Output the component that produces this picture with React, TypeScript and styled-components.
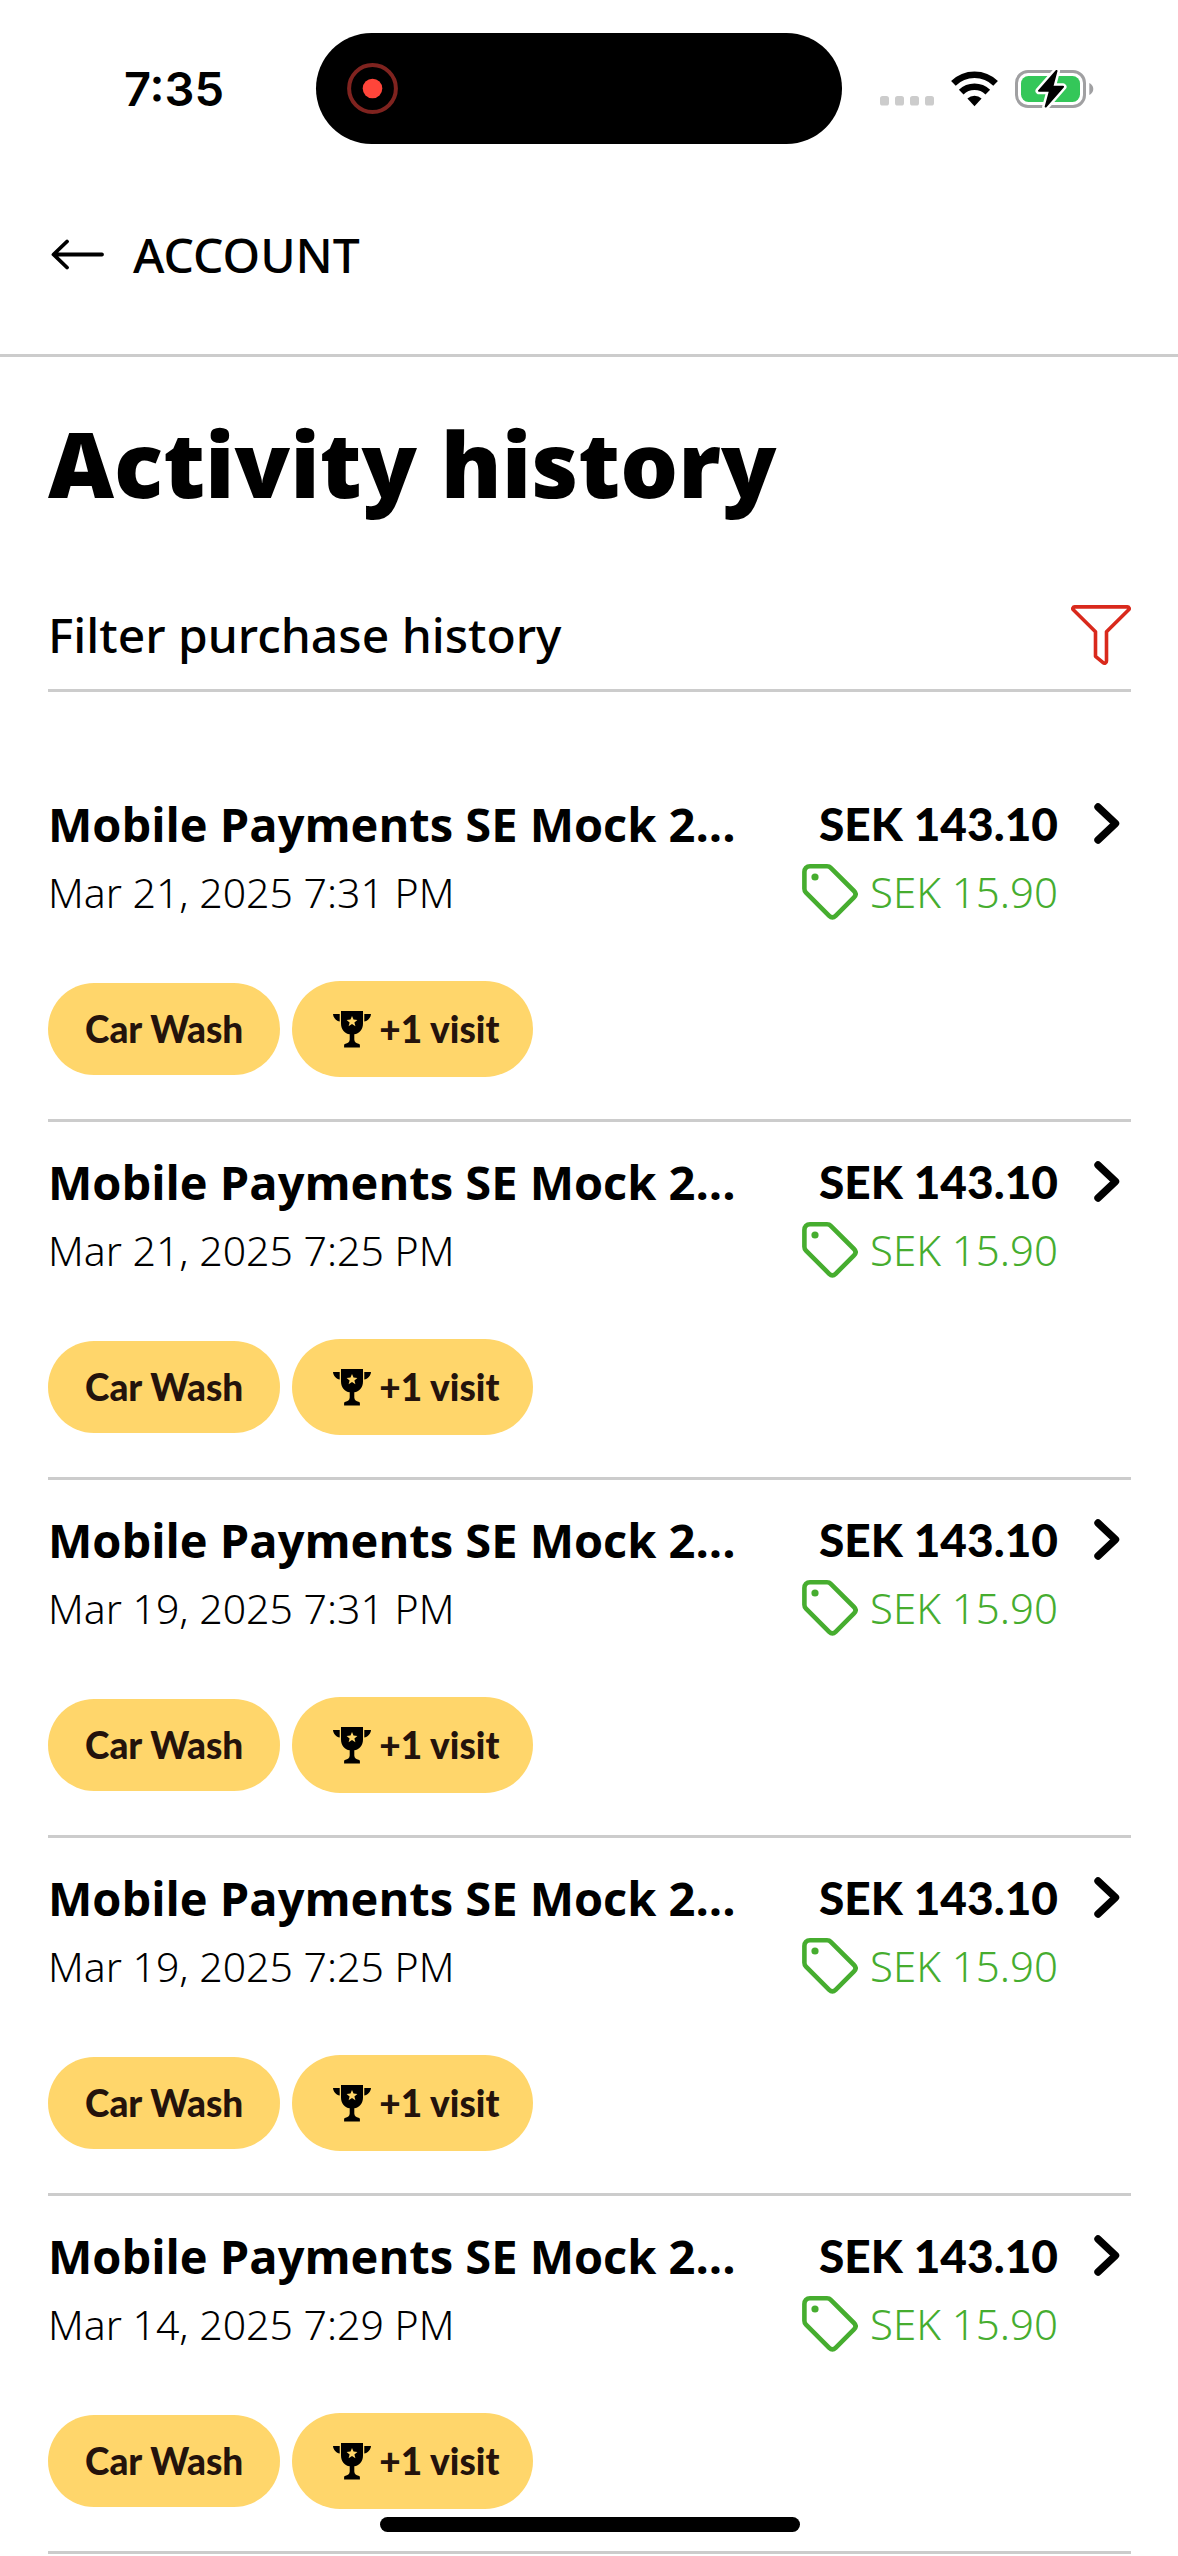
import React from "react";
import styled, { createGlobalStyle } from "styled-components";

const GlobalStyle = createGlobalStyle`
  *, *::before, *::after { box-sizing: border-box; }
  body {
    margin: 0;
    background: #fff;
    color: #000;
    font-family: Lato, "Open Sans", sans-serif;
    font-variant-ligatures: none;
  }
  h1, h2, p, ul { margin: 0; padding: 0; }
  ul { list-style: none; }
  a { color: inherit; text-decoration: none; }
  svg { display: block; flex: none; }
`;

const heading = `"Open Sans", "Noto Sans", sans-serif`;
const text = `"Noto Sans", "Open Sans", sans-serif`;

const Screen = styled.div`
  min-height: 100vh;
  background: #fff;
`;

const StatusBar = styled.div`
  display: grid;
  grid-template-columns: 1fr 526px 1fr;
  align-items: center;
  padding: 33px 20px 0 0;
`;

const Clock = styled.time`
  padding-right: 92px;
  text-align: right;
  font: 600 47px/56px Inter, sans-serif;
`;

const Island = styled.div`
  display: flex;
  align-items: center;
  height: 111px;
  padding-left: 31px;
  border-radius: 56px;
  background: #000;
`;

const StatusIcons = styled.div`
  display: flex;
  align-items: center;
  padding-left: 38px;
  gap: 17px;
`;

const Header = styled.header`
  padding: 83px 48px 71px;
  border-bottom: 3px solid #ccc;
`;

const BackLink = styled.a`
  display: inline-flex;
  align-items: center;
  gap: 29px;
  font-family: ${text};
  font-size: 48px;
  font-weight: 500;
  line-height: 56px;
`;

const Main = styled.main`
  padding: 52px 47px 0 48px;
`;

const Title = styled.h1`
  font-family: ${heading};
  font-size: 91px;
  font-weight: 800;
  line-height: 108px;
`;

const FilterButton = styled.button`
  display: flex;
  align-items: center;
  justify-content: space-between;
  width: 100%;
  margin: 88px 0 72px;
  padding: 0 0 24px;
  border: 0;
  border-bottom: 3px solid #ccc;
  background: none;
  color: inherit;
  font-family: ${text};
  font-size: 48px;
  font-weight: 500;
  line-height: 60px;
  text-align: left;
  cursor: pointer;
`;

const Row = styled.a`
  display: block;
  padding: 28px 0 42px;
  border-bottom: 3px solid #ccc;
`;

const Line = styled.div`
  display: flex;
  align-items: center;
  justify-content: space-between;
  padding-right: 11px;
`;

const Place = styled.h2`
  flex: 1;
  font-family: ${heading};
  font-size: 47px;
  font-weight: 700;
  line-height: 64px;
  white-space: nowrap;
`;

const Amount = styled.span`
  margin-right: 36px;
  font-size: 46px;
  font-weight: 900;
  line-height: 64px;
`;

const When = styled.time`
  font-family: ${text};
  font-size: 41px;
  font-weight: 300;
  line-height: 72px;
`;

const Discount = styled.span`
  display: flex;
  align-items: center;
  gap: 12px;
  margin-right: 62px;
  color: #46ad2f;
  font-family: ${text};
  font-size: 42px;
  font-weight: 300;
  line-height: 72px;
`;

const Chips = styled.div`
  display: flex;
  align-items: center;
  gap: 12px;
  margin-top: 53px;
`;

const Chip = styled.span<{ $tall?: boolean }>`
  display: flex;
  align-items: center;
  gap: 8px;
  height: ${(p) => (p.$tall ? 96 : 92)}px;
  padding: 0 ${(p) => (p.$tall ? 34 : 37)}px;
  padding-left: ${(p) => (p.$tall ? 41 : 37)}px;
  border-radius: 48px;
  background: #ffd66b;
  color: #24130c;
  font-size: 37px;
  font-weight: 900;
  line-height: 48px;
`;

const HomeIndicator = styled.div`
  position: fixed;
  bottom: 24px;
  left: 50%;
  width: 420px;
  height: 15px;
  margin-left: -209px;
  border-radius: 8px;
  background: #000;
`;

const RecordIcon = () => (
  <svg width="51" height="51" viewBox="0 0 51 51" aria-hidden="true">
    <circle cx="25.5" cy="25.5" r="23.4" fill="none" stroke="#7f231f" strokeWidth="4" />
    <circle cx="25.5" cy="25.5" r="9.8" fill="#ff453a" />
  </svg>
);

const SignalIcon = () => (
  <svg width="54" height="38" viewBox="0 0 54 38" fill="#ccc" aria-hidden="true">
    {[0, 15, 30, 45].map((x) => (
      <rect key={x} x={x} y="26" width="9" height="9.5" rx="2.6" />
    ))}
  </svg>
);

const WifiIcon = () => (
  <svg width="47" height="36" viewBox="0 0 47 36" aria-hidden="true">
    <g fill="none" stroke="#000" strokeWidth="6.6">
      <path d="M2.4 12.4A30 30 0 0 1 44.6 12.4" />
      <path d="M10.2 21.2A19 19 0 0 1 36.8 21.2" />
    </g>
    <path d="M16.4 27.6a10.4 10.4 0 0 1 14.2 0L23.5 35.2z" />
  </svg>
);

const BatteryIcon = () => (
  <svg width="79" height="38" viewBox="0 0 79 38" aria-hidden="true">
    <rect x="1.5" y="1.5" width="68" height="35" rx="11.5" fill="none" stroke="#a0a0a2" strokeWidth="3" />
    <path d="M74.3 13v12c2.400-1 4-3.400 4-6s-1.600-5-4-6z" fill="#a0a0a2" />
    <rect x="6" y="6" width="59" height="26" rx="7.500" fill="#34c759" />
    <path
      d="M41.500 1 24 20.800h11L30.700 36.600 48 16.800H37.300z"
      fill="#000"
      stroke="#fff"
      strokeWidth="7"
      strokeLinejoin="round"
      paintOrder="stroke"
    />
    <path d="M41.500 1 24 20.800h11L30.700 36.600 48 16.800H37.300z" stroke="#000" strokeWidth="2" strokeLinejoin="round" />
  </svg>
);

const ArrowIcon = () => (
  <svg width="56" height="32" viewBox="0 0 56 32" fill="none" stroke="#000" strokeWidth="3.8" strokeLinecap="round" strokeLinejoin="round" aria-hidden="true">
    <path d="M54 15.500H6M19 2.500 5.500 15.500 19 28.500" />
  </svg>
);

const FunnelIcon = () => (
  <svg width="60" height="60" viewBox="0 0 60 60" fill="none" stroke="#d9291c" strokeWidth="3.600" strokeLinejoin="round" aria-hidden="true">
    <path d="M3.600 1.900H56.400c1.600 0 2.400 1.800 1.300 2.900L35.500 26.800V56c0 2-2 2.800-3.400 1.600L24.500 51.300V26.800L2.300 4.800C1.200 3.700 2 1.900 3.600 1.900z" />
  </svg>
);

const ChevronIcon = () => (
  <svg width="26" height="42" viewBox="0 0 26 42" fill="none" stroke="#000" strokeWidth="7.400" aria-hidden="true">
    <path d="M4 4 21.500 20.500 4 37" strokeLinecap="round" strokeLinejoin="round" />
  </svg>
);

const TagIcon = () => (
  <svg width="56" height="56" viewBox="0 0 56 56" aria-hidden="true">
    <path
      d="M8 2.300H25c1.500 0 2.800.5 3.800 1.600L52 27c2 2 2 4.400 0 6.400L33.600 51.800c-2 2-4.400 2-6.400 0L4 28.600C2.900 27.500 2.400 26.300 2.400 24.800V8C2.400 4.500 4.500 2.300 8 2.300z"
      fill="none"
      stroke="#46ad2f"
      strokeWidth="4.600"
    />
    <circle cx="13" cy="13" r="3.600" fill="#46ad2f" />
  </svg>
);

const TrophyIcon = () => (
  <svg width="38" height="37" viewBox="0 0 38 37" aria-hidden="true">
    <path d="M8 0H30V12.500C30 18.600 26 22.600 21.300 23.300V28.600C21.300 31 23.500 32.500 25.500 32.800c.9.200 1.400.7 1.400 1.500V36.500H11.100V34.300c0-.8.500-1.300 1.400-1.500 2-.3 4.200-1.800 4.200-4.200V23.300C12 22.600 8 18.600 8 12.500z" />
    <path d="M0 3H6.700V10.600C3.400 10 .3 7 0 3zM38 3H31.300V10.600C34.600 10 37.700 7 38 3z" />
    <path d="M19 5l1.500 3.600 3.900.3-3 2.500 1 3.800L19 13.100l-3.400 2.100 1-3.800-3-2.500 3.900-.3z" fill="#ffd66b" />
  </svg>
);

const purchases = [
  "Mar 21, 2025 7:31 PM",
  "Mar 21, 2025 7:25 PM",
  "Mar 19, 2025 7:31 PM",
  "Mar 19, 2025 7:25 PM",
  "Mar 14, 2025 7:29 PM",
];

const Purchase = ({ when }: { when: string }) => (
  <li>
    <Row href="#receipt">
      <Line>
        <Place>Mobile Payments SE Mock 2...</Place>
        <Amount>SEK 143.10</Amount>
        <ChevronIcon />
      </Line>
      <Line>
        <When>{when}</When>
        <Discount>
          <TagIcon />
          SEK 15.90
        </Discount>
      </Line>
      <Chips>
        <Chip>Car Wash</Chip>
        <Chip $tall>
          <TrophyIcon />
          +1 visit
        </Chip>
      </Chips>
    </Row>
  </li>
);

export default function App() {
  return (
    <Screen>
      <GlobalStyle />
      <StatusBar>
        <Clock>7:35</Clock>
        <Island>
          <RecordIcon />
        </Island>
        <StatusIcons>
          <SignalIcon />
          <WifiIcon />
          <BatteryIcon />
        </StatusIcons>
      </StatusBar>
      <Header>
        <BackLink href="#account">
          <ArrowIcon />
          ACCOUNT
        </BackLink>
      </Header>
      <Main>
        <Title>Activity history</Title>
        <FilterButton type="button">
          Filter purchase history
          <FunnelIcon />
        </FilterButton>
        <ul>
          {purchases.map((when) => (
            <Purchase key={when} when={when} />
          ))}
        </ul>
      </Main>
      <HomeIndicator />
    </Screen>
  );
}
